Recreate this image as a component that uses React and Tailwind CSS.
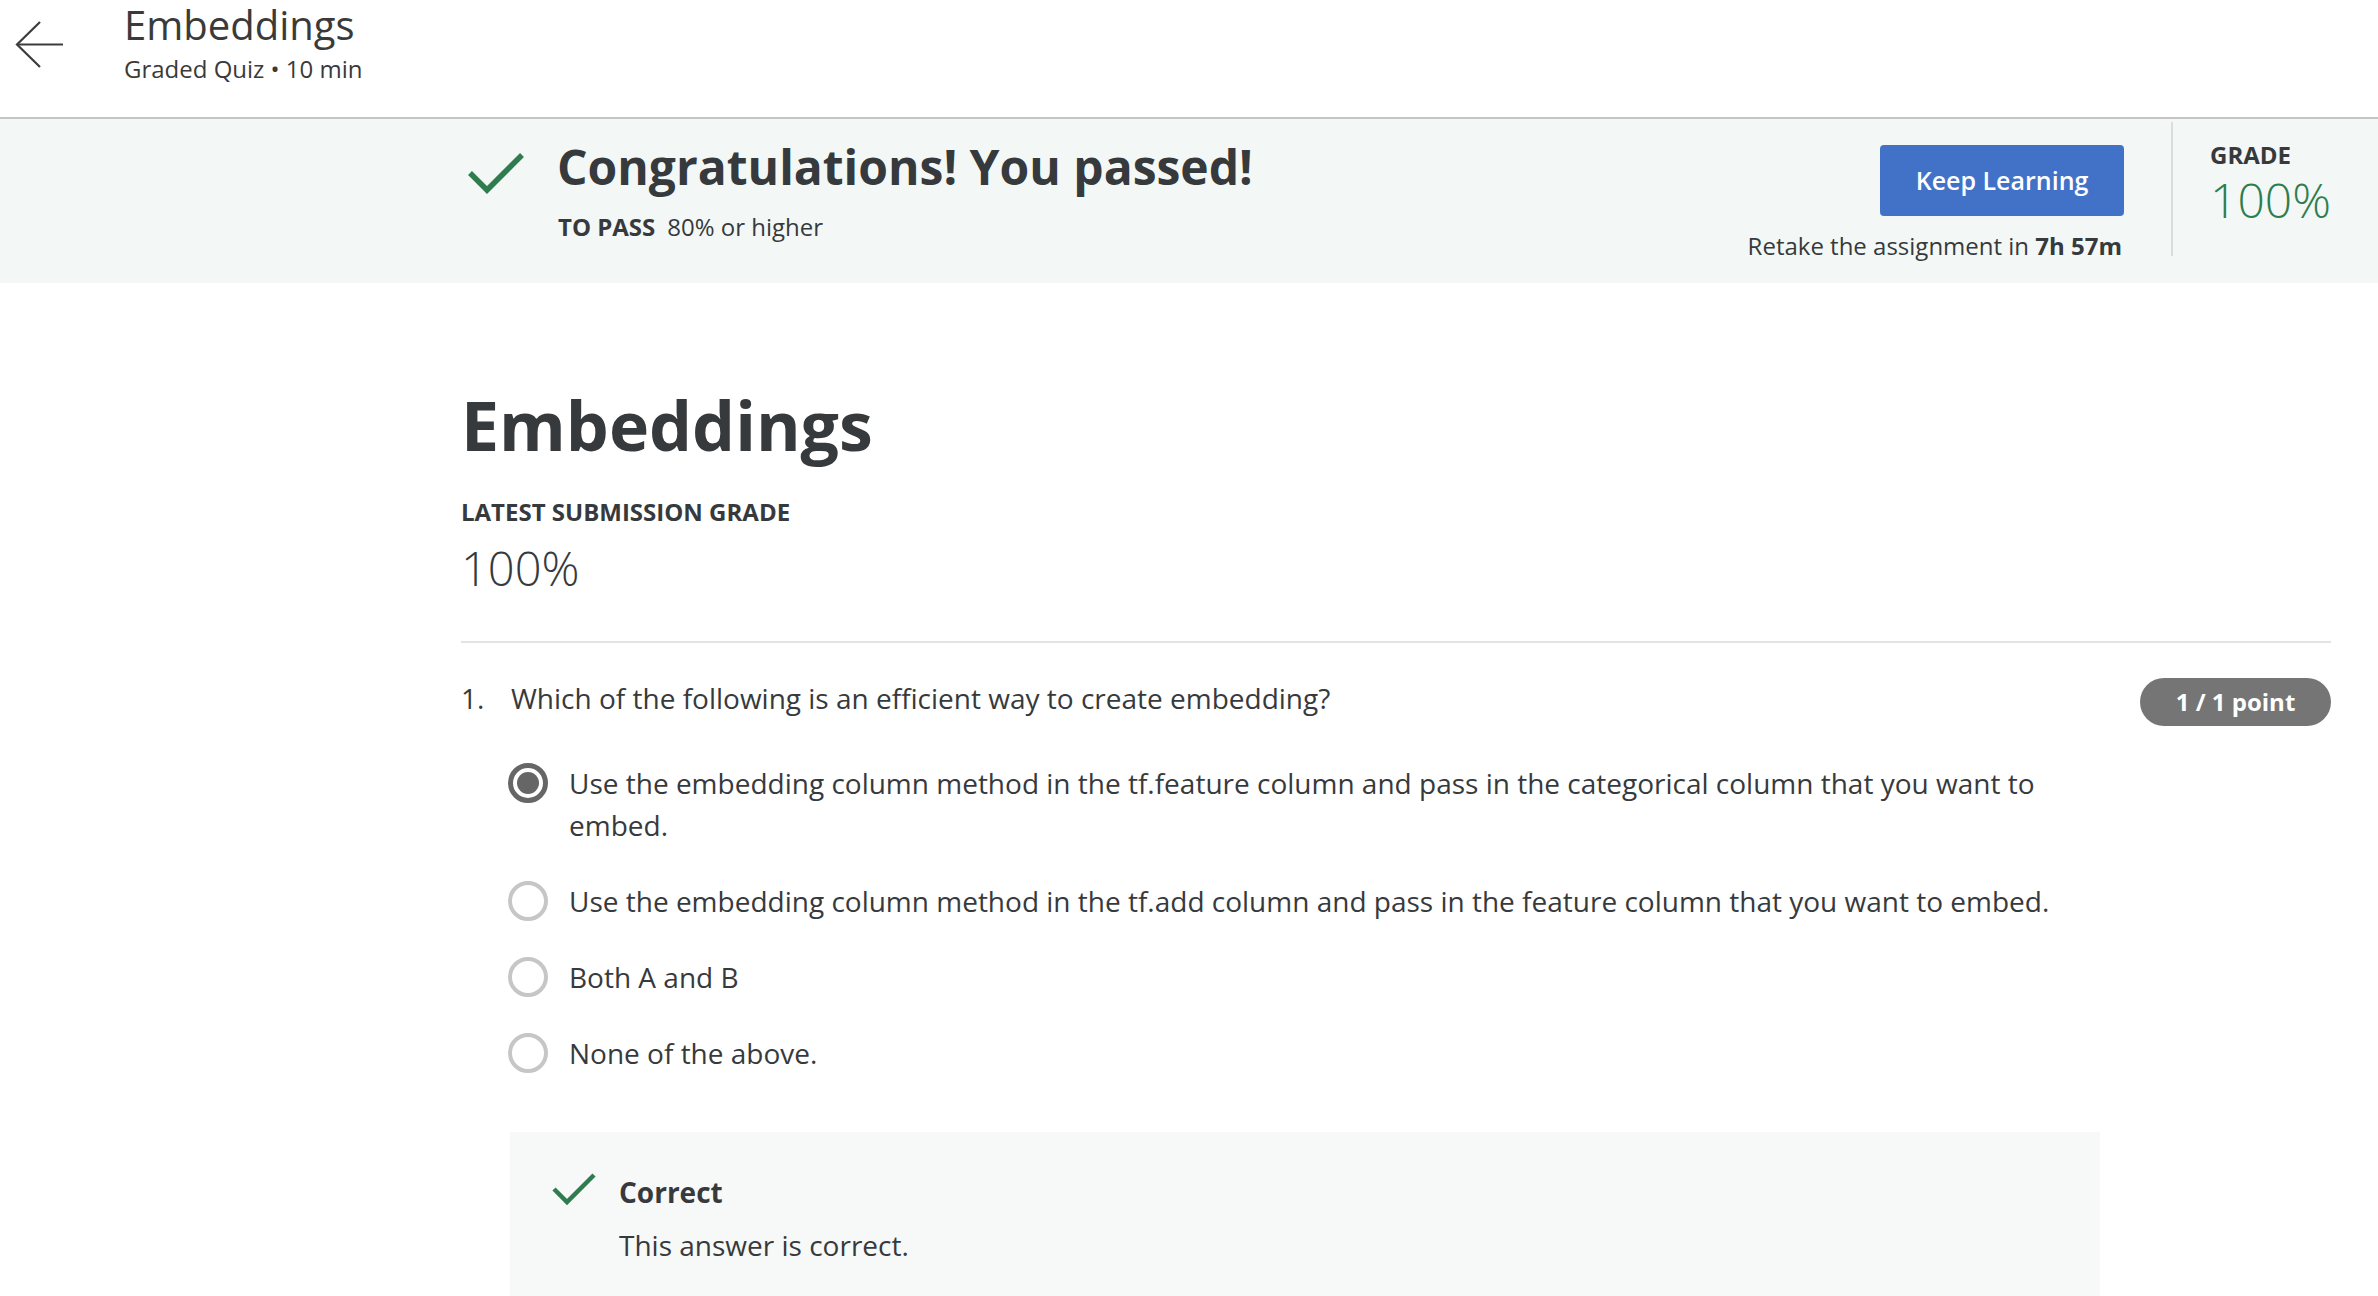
import React from "react";

const Radio = ({ selected }) =>
  selected ? (
    <div className="w-[40px] h-[40px] shrink-0 rounded-full border-[5px] border-[#666666] flex items-center justify-center mt-[1px]">
      <div className="w-[22px] h-[22px] rounded-full bg-[#666666]" />
    </div>
  ) : (
    <div className="w-[40px] h-[40px] shrink-0 rounded-full border-[4px] border-[#c6c6c6] mt-[1px]" />
  );

const options = [
  {
    text: "Use the embedding column method in the tf.feature column and pass in the categorical column that you want to embed.",
    selected: true,
  },
  {
    text: "Use the embedding column method in the tf.add column and pass in the feature column that you want to embed.",
  },
  { text: "Both A and B" },
  { text: "None of the above." },
];

export default function App() {
  return (
    <div
      className="min-h-[1296px] bg-white text-[#373a3c]"
      style={{ fontFamily: '"Open Sans", "Noto Sans", sans-serif' }}
    >
      {/* Header */}
      <header className="h-[119px] border-b-[2px] border-[#c4c4c4] flex items-start pl-[15px]">
        <svg
          width="50"
          height="50"
          viewBox="0 0 50 50"
          className="mt-[20px] shrink-0"
          fill="none"
          stroke="#3c3c3c"
          strokeWidth="2.2"
        >
          <path d="M2 24.5 H48" />
          <path d="M25 2 L2 24.5 L25 47" />
        </svg>
        <div className="ml-[59px] pt-[1px]">
          <div className="text-[40px] leading-[48px] text-[#3a3a3a]">Embeddings</div>
          <div className="text-[24px] leading-[32px] mt-[4px] text-[#3a3a3a]">
            Graded Quiz • 10 min
          </div>
        </div>
      </header>

      {/* Banner */}
      <section className="h-[164px] bg-[#f3f8f7] pl-[461px] pr-[47px] flex justify-between items-start">
        <div className="flex items-start pl-[6px]">
          <svg width="58" height="46" viewBox="0 0 58 46" className="mt-[30px] shrink-0" fill="none">
            <path d="M3 24 L20 41 L55 6" stroke="#2f7d4f" strokeWidth="5.5" />
          </svg>
          <div className="ml-[32px] pt-[18px]">
            <div className="text-[48px] leading-[60px] font-bold text-[#373a3c]">
              Congratulations! You passed!
            </div>
            <div className="mt-[14px] ml-[1px] text-[24px] leading-[32px]">
              <span className="font-bold">TO PASS</span>
              <span className="ml-[12px]">80% or higher</span>
            </div>
          </div>
        </div>
        <div className="flex items-start">
          <div className="flex flex-col items-end pt-[26px]">
            <button className="w-[244px] h-[71px] rounded-[4px] bg-[#4272c8] text-white text-[25px] font-semibold">
              Keep Learning
            </button>
            <div className="mt-[14px] text-[24px] leading-[32px] mr-[2px]">
              Retake the assignment in <span className="font-bold">7h 57m</span>
            </div>
          </div>
          <div className="ml-[47px] mt-[3px] w-[2px] h-[134px] bg-[#dcdcdc]" />
          <div className="ml-[37px] pt-[22px]">
            <div className="text-[24px] leading-[28px] font-bold">GRADE</div>
            <div className="mt-[7px] text-[48px] leading-[48px] font-light text-[#2f7d4f]">100%</div>
          </div>
        </div>
      </section>

      {/* Main */}
      <main className="pl-[461px] pr-[47px]">
        <h1 className="mt-[100px] text-[68px] leading-[84px] font-bold text-[#373a3c]">Embeddings</h1>
        <div className="mt-[29px] text-[24px] leading-[32px] font-bold">LATEST SUBMISSION GRADE</div>
        <div className="mt-[12px] text-[47px] leading-[56px] font-light">100%</div>
        <div className="mt-[45px] h-[2px] bg-[#e3e3e3]" />

        <div className="mt-[35px] flex justify-between items-start">
          <div className="flex text-[28px] leading-[42px] -mt-[1px]">
            <span className="w-[50px]">1.</span>
            <span>Which of the following is an efficient way to create embedding?</span>
          </div>
          <div className="w-[191px] h-[48px] rounded-full bg-[#757575] text-white text-[24px] font-bold flex items-center justify-center">
            1 / 1 point
          </div>
        </div>

        <div className="mt-[36px] ml-[47px] w-[1592px] flex flex-col gap-[34px]">
          {options.map((o, i) => (
            <div key={i} className="flex items-start gap-[21px]">
              <Radio selected={o.selected} />
              <div className="text-[28px] leading-[42px]">{o.text}</div>
            </div>
          ))}
        </div>

        <div className="mt-[58px] ml-[49px] w-[1590px] bg-[#f7f8f8] pt-[39px] pb-[40px] pl-[42px]">
          <div className="flex items-center">
            <svg width="44" height="34" viewBox="0 0 44 34" className="shrink-0 -mt-[6px]" fill="none">
              <path d="M2 17 L15 30 L42 3" stroke="#2f7d4f" strokeWidth="4.5" />
            </svg>
            <span className="ml-[23px] text-[28px] leading-[42px] font-bold">Correct</span>
          </div>
          <div className="ml-[67px] mt-[11px] text-[28px] leading-[42px]">This answer is correct.</div>
        </div>
      </main>
    </div>
  );
}
